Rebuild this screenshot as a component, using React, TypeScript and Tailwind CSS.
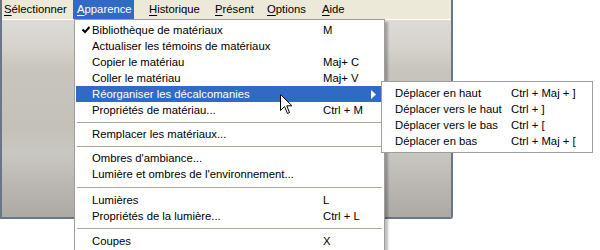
import React from "react";

const font = { fontFamily: '"Liberation Sans", Arial, sans-serif' };

type Item =
  | { sep: number }
  | { label: string; key?: string; check?: boolean; hi?: boolean; sub?: boolean };

const items: Item[] = [
  { label: "Bibliothèque de matériaux", key: "M", check: true },
  { label: "Actualiser les témoins de matériaux" },
  { label: "Copier le matériau", key: "Maj+ C" },
  { label: "Coller le matériau", key: "Maj+ V" },
  { label: "Réorganiser les décalcomanies", hi: true, sub: true },
  { label: "Propriétés de matériau...", key: "Ctrl + M" },
  { sep: 8 },
  { label: "Remplacer les matériaux..." },
  { sep: 8 },
  { label: "Ombres d'ambiance..." },
  { label: "Lumière et ombres de l'environnement..." },
  { sep: 10 },
  { label: "Lumières", key: "L" },
  { label: "Propriétés de la lumière...", key: "Ctrl + L" },
  { sep: 9 },
  { label: "Coupes", key: "X" },
];

const sub = [
  ["Déplacer en haut", "Ctrl + Maj + ]"],
  ["Déplacer vers le haut", "Ctrl + ]"],
  ["Déplacer vers le bas", "Ctrl + ["],
  ["Déplacer en bas", "Ctrl + Maj + ["],
];

function U({ c, rest }: { c: string; rest: string }) {
  return (
    <>
      <span className="underline underline-offset-[2px]">{c}</span>
      {rest}
    </>
  );
}

export default function App() {
  return (
    <div
      className="relative w-[600px] h-[250px] bg-white overflow-hidden text-[11.3px] text-black"
      style={font}
    >
      {/* window */}
      <div className="w-[453px] h-[219px] border-l-2 border-r-2 border-b-2 border-[#6a7682] rounded-br-[3px] flex flex-col overflow-hidden">
        <div className="h-[20px] bg-[#ECE9D8] border-b border-white flex items-center shrink-0">
          <span className="w-[71px] pl-[2px] h-[19px] flex items-center whitespace-nowrap">
            <U c="S" rest="électionner" />
          </span>
          <span className="w-[61px] pl-[4px] h-[19px] flex items-center bg-[#316AC5] text-white whitespace-nowrap">
            <U c="A" rest="pparence" />
          </span>
          <span className="w-[77px] pl-[15px] h-[19px] flex items-center whitespace-nowrap">
            <U c="H" rest="istorique" />
          </span>
          <span className="w-[52px] pl-[4px] h-[19px] flex items-center whitespace-nowrap">
            <U c="P" rest="résent" />
          </span>
          <span className="w-[55px] pl-[4px] h-[19px] flex items-center whitespace-nowrap">
            <U c="O" rest="ptions" />
          </span>
          <span className="pl-[4px] h-[19px] flex items-center whitespace-nowrap">
            <U c="A" rest="ide" />
          </span>
        </div>
        <div className="flex-1 bg-[linear-gradient(180deg,#dddbd6_0%,#d6d3ce_14%,#c8c5bf_25%,#c4c1bb_55%,#c9c7c2_68%,#b9b6b1_85%,#adaaa5_100%)]" />
      </div>

      {/* dropdown */}
      <div className="absolute left-[74px] top-[19px] w-[311px] h-[240px] bg-white border border-[#9d9d9d] shadow-[3px_3px_2px_rgba(0,0,0,0.25)] pt-[2px] px-[1px]">
        {items.map((it, i) =>
          "sep" in it ? (
            <div
              key={i}
              className={`${it.sep === 10 ? "h-[10px]" : it.sep === 9 ? "h-[9px]" : "h-[8px]"} flex items-center px-[1px]`}
            >
              <div className="w-full h-px bg-[#aca899]" />
            </div>
          ) : (
            <div
              key={i}
              className={`relative h-[16px] flex items-center ${
                it.hi ? "bg-[#316AC5] text-white" : ""
              }`}
            >
              <span className="w-[16px] flex justify-center">
                {it.check && (
                  <svg width="8" height="8" viewBox="0 0 8 8" className="ml-[4px]">
                    <path d="M0.5 3.5 L3 6 L7.5 1" stroke="black" strokeWidth="2" fill="none" />
                  </svg>
                )}
              </span>
              <span className="w-[231px] whitespace-nowrap">{it.label}</span>
              <span className="whitespace-nowrap">{it.key ?? ""}</span>
              {it.sub && (
                <svg
                  width="5"
                  height="9"
                  viewBox="0 0 5 9"
                  className="absolute right-[7px] top-[4px]"
                >
                  <path d="M0 0 L5 4.5 L0 9 Z" fill="white" />
                </svg>
              )}
            </div>
          )
        )}
      </div>

      {/* submenu */}
      <div className="absolute left-[381px] top-[81px] w-[212px] h-[72px] bg-white border border-[#9d9d9d] pt-[3px]">
        {sub.map(([a, b], i) => (
          <div key={i} className="h-[16px] flex items-center">
            <span className="w-[129px] pl-[13px] whitespace-nowrap">{a}</span>
            <span className="whitespace-nowrap">{b}</span>
          </div>
        ))}
      </div>

      {/* cursor */}
      <svg
        width="13"
        height="21"
        viewBox="0 0 13 21"
        className="absolute left-[280px] top-[94px]"
      >
        <path
          d="M0.5 0.5 L0.5 16.5 L4.5 12.5 L7.5 19.5 L9.5 18.5 L6.8 11.8 L12 11.8 Z"
          fill="white"
          stroke="black"
          strokeWidth="1"
          strokeLinejoin="miter"
        />
      </svg>
    </div>
  );
}
